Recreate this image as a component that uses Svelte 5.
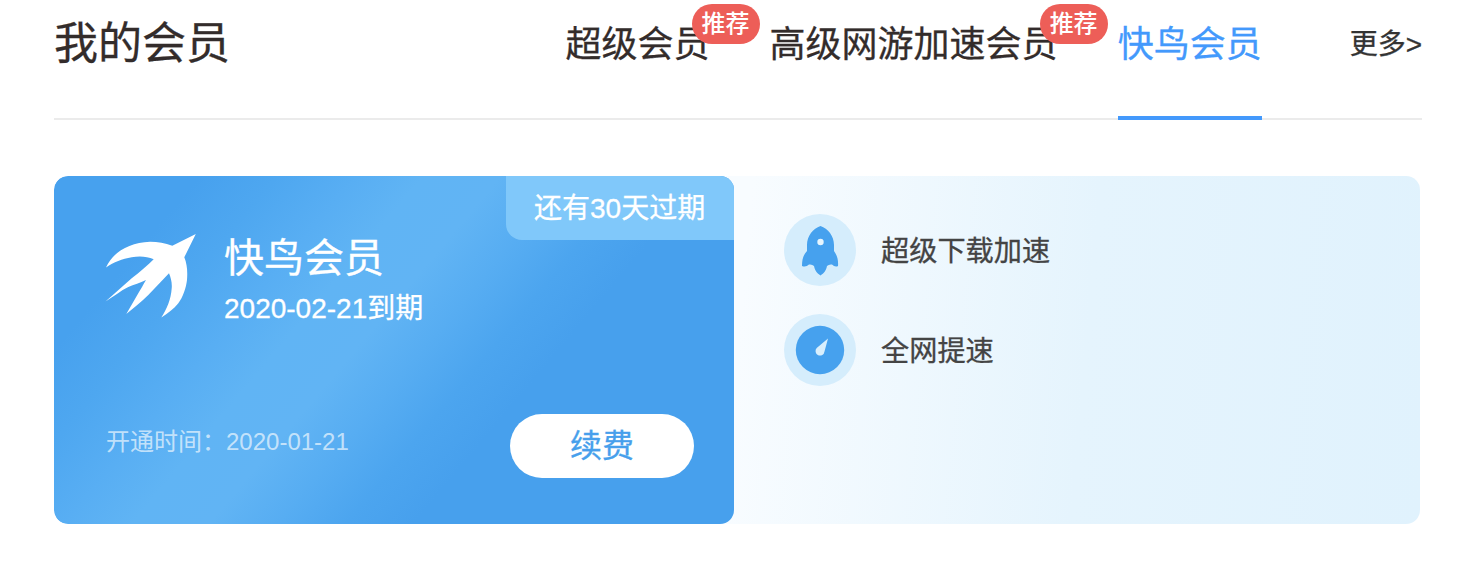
<script>
  const tabs = [
    { label: '超级会员', hot: true },
    { label: '高级网游加速会员', hot: true },
    { label: '快鸟会员', hot: false },
  ];
  let active = $state(2);
</script>

<main>
  <header>
    <h1>我的会员</h1>
    <nav>
      {#each tabs as tab, i}
        <button class="tab" class:active={active === i} onclick={() => (active = i)}>
          {tab.label}
          {#if tab.hot}<span class="badge">推荐</span>{/if}
        </button>
      {/each}
    </nav>
    <a class="more" href="#more">更多&gt;</a>
  </header>

  <section class="panel">
    <article class="card">
      <div class="ribbon">还有30天过期</div>
      <div class="identity">
        <svg class="bird" viewBox="0 0 94 88" width="94" height="88" aria-hidden="true">
          <path d="M91.800 1 L68.300 12.700 C61 10 54 8.700 46 8.700 C25 9.500 9 19 2 34.500 C10 29 18 26 27.700 24.300 C36 22.800 43 23.500 49.700 26.300 C44 32 36 39 27.700 45.300 L1.500 68.500 C9 64 17 57.500 24.300 54 C30 51.500 36 50 42 47 C39 52 37 56 34.300 60.300 L22.300 81 C30 75 38 68 44.300 62 L65 40.300 C67 45 68.200 50 67.700 55.300 C67 66 63 76 57.300 84.500 C64 80 70 76 74.300 70.300 C79 64 82 55 83 47 C83.700 38 83 31 80.300 24.300 Z" fill="#fff" />
        </svg>
        <div class="info">
          <h2>快鸟会员</h2>
          <p>2020-02-21到期</p>
        </div>
      </div>
      <footer>
        <span class="since">开通时间：2020-01-21</span>
        <button class="renew">续费</button>
      </footer>
    </article>

    <ul class="perks">
      <li>
        <svg viewBox="0 0 72 72" width="72" height="72" aria-hidden="true">
          <circle cx="36" cy="36" r="36" fill="#d5edfc" />
          <path d="M36.500 12 C29 14.500 23 22 23 31 V37 C19 41 18 46 18 52 Q22 53.500 25 50.500 Q28 50 30 52 C31 57 33 59 36.500 61.500 C40 59 42 57 43 52 Q45 50 48 50.500 Q51 53.500 54 52 C54.500 46 53 41 50 37 V31 C50 22 44 14.500 36.500 12 Z" fill="#46a1ee" />
          <circle cx="36.500" cy="28" r="3.200" fill="#e6f5fe" />
        </svg>
        <span>超级下载加速</span>
      </li>
      <li>
        <svg viewBox="0 0 72 72" width="72" height="72" aria-hidden="true">
          <circle cx="36" cy="36" r="36" fill="#d5edfc" />
          <circle cx="36" cy="36" r="24.200" fill="#46a1ee" />
          <path d="M44 24.500 L40.500 37.500 A4.500 4.500 0 1 1 32.700 34 Z" fill="#d9effd" />
        </svg>
        <span>全网提速</span>
      </li>
    </ul>
  </section>
</main>

<style>
  :global(body) {
    background: #fff;
  }

  main {
    box-sizing: border-box;
    width: 1468px;
    height: 582px;
    padding: 0 46px 0 54px;
    overflow: hidden;
    font-family: 'Liberation Sans', 'Noto Sans CJK SC', sans-serif;
    color: #332c2b;
    -webkit-text-stroke: 0.300px currentColor;
  }

  header {
    display: flex;
    box-sizing: border-box;
    height: 120px;
    border-bottom: 2px solid #ebebeb;
  }

  h1,
  h2,
  p,
  ul {
    margin: 0;
    padding: 0;
    font-weight: 400;
  }

  h1 {
    font-size: 44px;
    line-height: 87px;
  }

  nav {
    display: flex;
    gap: 60px;
    margin-left: auto;
  }

  button {
    border: 0;
    padding: 0;
    background: none;
    font: inherit;
    color: inherit;
    cursor: pointer;
  }

  .tab {
    position: relative;
    display: flex;
    box-sizing: border-box;
    height: 120px;
    font-size: 36px;
    line-height: 90px;
    white-space: nowrap;
    border-bottom: 4px solid transparent;
  }

  .tab.active {
    color: #4399fc;
    border-bottom-color: #4399fc;
  }

  .badge {
    position: absolute;
    top: 4px;
    right: -50px;
    width: 68px;
    height: 40px;
    border-radius: 20px;
    background: #ed5e58;
    color: #fff;
    font-size: 24px;
    font-weight: 500;
    line-height: 39px;
    text-align: center;
    -webkit-text-stroke: 0;
  }

  .more {
    margin-left: 88px;
    font-size: 28px;
    line-height: 90px;
    color: #333;
    text-decoration: none;
    white-space: nowrap;
  }

  .panel {
    display: flex;
    width: 1366px;
    height: 348px;
    margin-top: 56px;
    border-radius: 14px;
    overflow: hidden;
    background: linear-gradient(95deg, #f8fcff 50%, #e5f4fd 75%, #e0f2fd 100%);
  }

  .card {
    position: relative;
    display: flex;
    flex-direction: column;
    justify-content: space-between;
    box-sizing: border-box;
    width: 680px;
    padding: 54px 40px 46px 50px;
    border-radius: 14px;
    overflow: hidden;
    color: #fff;
    background: linear-gradient(130deg, #47a1ee 15%, #4ea7f0 23%, #58aef3 31%, #60b4f4 38%, #61b4f4 46%, #57adf2 53%, #4ca5ef 60%, #47a0ed 67%);
  }

  .ribbon {
    position: absolute;
    top: 0;
    right: 0;
    box-sizing: border-box;
    width: 228px;
    height: 64px;
    padding-left: 28px;
    border-bottom-left-radius: 16px;
    background: #80c8fa;
    font-size: 28px;
    line-height: 66px;
    white-space: nowrap;
  }

  .identity {
    display: flex;
    gap: 26px;
  }

  .bird {
    margin-top: 3px;
  }

  h2 {
    font-size: 40px;
    line-height: 56px;
  }

  .info p {
    font-size: 28px;
    line-height: 46px;
  }

  footer {
    display: flex;
    align-items: center;
    justify-content: space-between;
    height: 64px;
  }

  .since {
    margin: -13px 0 0 2px;
    font-size: 24px;
    color: rgba(255, 255, 255, 0.65);
    -webkit-text-stroke: 0;
  }

  .renew {
    width: 184px;
    height: 64px;
    border-radius: 32px;
    background: #fff;
    color: #479fec;
    font-size: 32px;
    line-height: 60px;
  }

  .perks {
    display: flex;
    flex-direction: column;
    gap: 28px;
    padding: 38px 0 0 50px;
    list-style: none;
    font-size: 28.200px;
    color: #444;
  }

  .perks li {
    display: flex;
    align-items: center;
    gap: 25px;
    height: 72px;
  }

  .perks span {
    margin-top: -3px;
  }
</style>
